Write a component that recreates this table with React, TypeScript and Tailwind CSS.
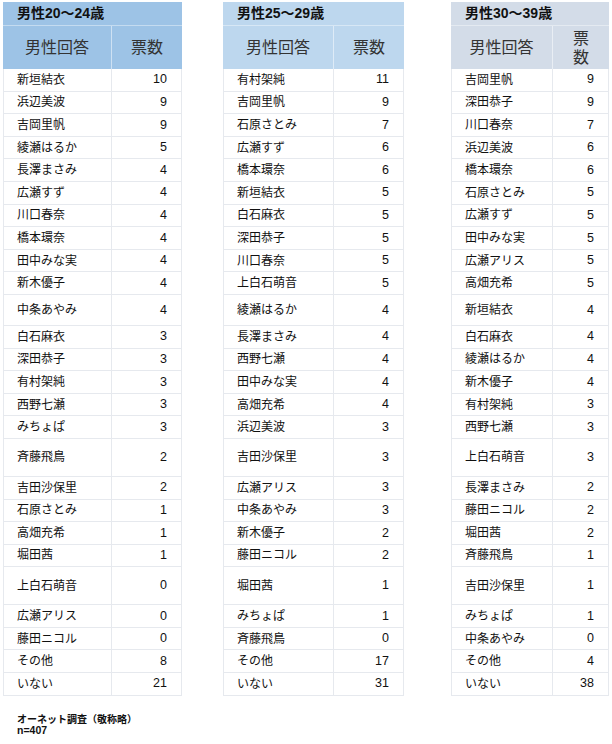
import React from "react";

type Row = [string, number];

const t1: Row[] = [
  ["新垣結衣", 10], ["浜辺美波", 9], ["吉岡里帆", 9], ["綾瀬はるか", 5], ["長澤まさみ", 4],
  ["広瀬すず", 4], ["川口春奈", 4], ["橋本環奈", 4], ["田中みな実", 4], ["新木優子", 4],
  ["中条あやみ", 4], ["白石麻衣", 3], ["深田恭子", 3], ["有村架純", 3], ["西野七瀬", 3],
  ["みちょぱ", 3], ["斉藤飛鳥", 2], ["吉田沙保里", 2], ["石原さとみ", 1], ["高畑充希", 1],
  ["堀田茜", 1], ["上白石萌音", 0], ["広瀬アリス", 0], ["藤田ニコル", 0], ["その他", 8], ["いない", 21],
];

const t2: Row[] = [
  ["有村架純", 11], ["吉岡里帆", 9], ["石原さとみ", 7], ["広瀬すず", 6], ["橋本環奈", 6],
  ["新垣結衣", 5], ["白石麻衣", 5], ["深田恭子", 5], ["川口春奈", 5], ["上白石萌音", 5],
  ["綾瀬はるか", 4], ["長澤まさみ", 4], ["西野七瀬", 4], ["田中みな実", 4], ["高畑充希", 4],
  ["浜辺美波", 3], ["吉田沙保里", 3], ["広瀬アリス", 3], ["中条あやみ", 3], ["新木優子", 2],
  ["藤田ニコル", 2], ["堀田茜", 1], ["みちょぱ", 1], ["斉藤飛鳥", 0], ["その他", 17], ["いない", 31],
];

const t3: Row[] = [
  ["吉岡里帆", 9], ["深田恭子", 9], ["川口春奈", 7], ["浜辺美波", 6], ["橋本環奈", 6],
  ["石原さとみ", 5], ["広瀬すず", 5], ["田中みな実", 5], ["広瀬アリス", 5], ["高畑充希", 5],
  ["新垣結衣", 4], ["白石麻衣", 4], ["綾瀬はるか", 4], ["新木優子", 4], ["有村架純", 3],
  ["西野七瀬", 3], ["上白石萌音", 3], ["長澤まさみ", 2], ["藤田ニコル", 2], ["堀田茜", 2],
  ["斉藤飛鳥", 1], ["吉田沙保里", 1], ["みちょぱ", 1], ["中条あやみ", 0], ["その他", 4], ["いない", 38],
];

// sheet rows are shared across the three tables, a few of them are taller
const rowH = (i: number) =>
  i === 10 ? "h-[31px]" : i === 16 || i === 21 ? "h-[38px]" : "h-[22.6px]";

const VoteTable = ({
  title, rows, bg, colA, colB, narrow,
}: {
  title: string; rows: Row[]; bg: string; colA: string; colB: string; narrow?: boolean;
}) => (
  <div className="flex flex-col">
    <div className={`${bg} h-[24px] flex items-center pl-[14px] border-b border-white/40 text-[14px] font-bold text-[#111]`}>
      {title}
    </div>
    <div className={`${bg} h-[43px] flex text-[16px] text-[#333]`}>
      <div className={`${colA} flex items-center justify-center border-r border-white/50`}>男性回答</div>
      <div className={`${colB} flex items-center justify-center text-center leading-[19px]`}>
        {narrow ? <span>票<br />数</span> : "票数"}
      </div>
    </div>
    {rows.map(([name, n], i) => (
      <div key={name} className={`${rowH(i)} flex text-[12px] text-[#111] border-b border-[#e6e9ee]`}>
        <div className={`${colA} flex items-center pl-[13px] border-l border-r border-[#e6e9ee]`}>{name}</div>
        <div className={`${colB} flex items-center justify-end pr-[14px] border-r border-[#e6e9ee] text-[12.5px]`}>{n}</div>
      </div>
    ))}
  </div>
);

export default function App() {
  return (
    <div className="w-[612px] h-[744px] bg-white font-['Liberation_Sans','Noto_Sans_CJK_JP',sans-serif]">
      <div className="flex pt-[2px] pl-[3px]">
        <VoteTable title="男性20～24歳" rows={t1} bg="bg-[#9dc3e6]" colA="w-[109px]" colB="w-[70px]" />
        <div className="ml-[41px]">
          <VoteTable title="男性25～29歳" rows={t2} bg="bg-[#bdd7ee]" colA="w-[111px]" colB="w-[70px]" />
        </div>
        <div className="ml-[47px]">
          <VoteTable title="男性30～39歳" rows={t3} bg="bg-[#d3dce8]" colA="w-[102px]" colB="w-[56px]" narrow />
        </div>
      </div>
      <div className="mt-[18px] pl-[17px] text-[10px] leading-[11px] font-bold text-[#111]">
        <div>オーネット調査（敬称略）</div>
        <div className="text-[10.5px]">n=407</div>
      </div>
    </div>
  );
}
